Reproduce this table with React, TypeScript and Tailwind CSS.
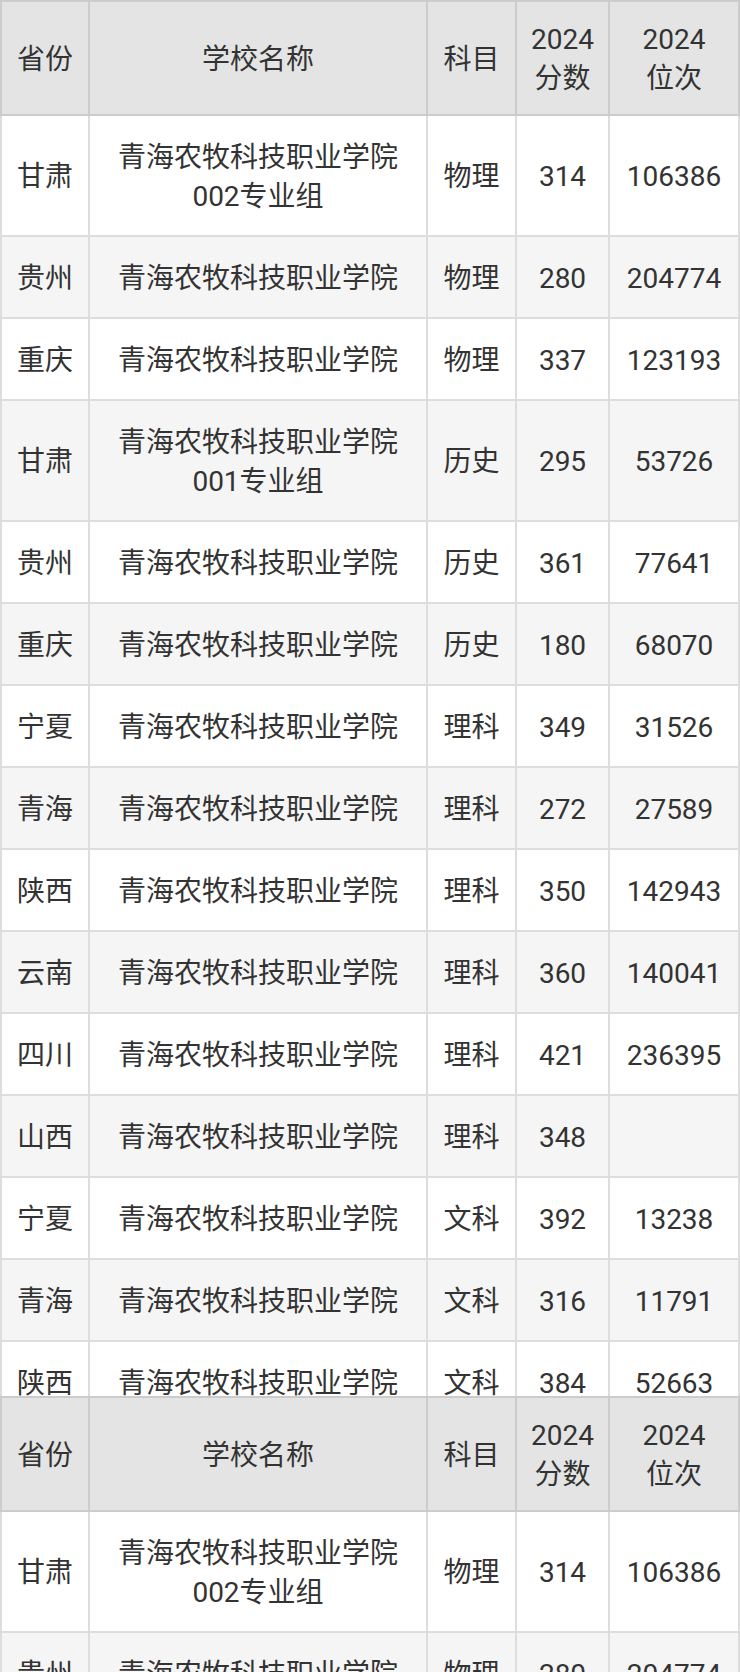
import React from 'react';

type Row = {
  province: string;
  school: string;
  group?: string;
  subject: string;
  score: string;
  rank: string;
};

const school = '青海农牧科技职业学院';

const rows: Row[] = [
  { province: '甘肃', school, group: '002专业组', subject: '物理', score: '314', rank: '106386' },
  { province: '贵州', school, subject: '物理', score: '280', rank: '204774' },
  { province: '重庆', school, subject: '物理', score: '337', rank: '123193' },
  { province: '甘肃', school, group: '001专业组', subject: '历史', score: '295', rank: '53726' },
  { province: '贵州', school, subject: '历史', score: '361', rank: '77641' },
  { province: '重庆', school, subject: '历史', score: '180', rank: '68070' },
  { province: '宁夏', school, subject: '理科', score: '349', rank: '31526' },
  { province: '青海', school, subject: '理科', score: '272', rank: '27589' },
  { province: '陕西', school, subject: '理科', score: '350', rank: '142943' },
  { province: '云南', school, subject: '理科', score: '360', rank: '140041' },
  { province: '四川', school, subject: '理科', score: '421', rank: '236395' },
  { province: '山西', school, subject: '理科', score: '348', rank: '' },
  { province: '宁夏', school, subject: '文科', score: '392', rank: '13238' },
  { province: '青海', school, subject: '文科', score: '316', rank: '11791' },
  { province: '陕西', school, subject: '文科', score: '384', rank: '52663' },
];

const cols = 'grid grid-cols-[86px_336px_87px_91px_128px] gap-x-[2px] px-[2px]';
const cell = 'flex items-center justify-center text-center pt-[2px]';

function ScoreTable() {
  return (
    <div className="w-[740px] text-[28px] text-[#333] font-['Roboto','Noto_Sans_CJK_SC',sans-serif]">
      {/* header */}
      <div className={`${cols} bg-[#cccccc] py-[2px] leading-[39px]`}>
        <div className={`${cell} h-[112px] bg-[#e4e4e4]`}>省份</div>
        <div className={`${cell} bg-[#e4e4e4]`}>学校名称</div>
        <div className={`${cell} bg-[#e4e4e4]`}>科目</div>
        <div className={`${cell} bg-[#e4e4e4]`}>
          2024
          <br />
          分数
        </div>
        <div className={`${cell} bg-[#e4e4e4]`}>
          2024
          <br />
          位次
        </div>
      </div>

      {/* body */}
      {rows.map((r, i) => {
        const bg = i % 2 === 0 ? 'bg-white' : 'bg-[#f5f5f5]';
        const h = r.group ? 'h-[119px]' : 'h-[80px]';
        return (
          <div key={i} className={`${cols} bg-[#dddddd] pb-[2px] leading-[39px]`}>
            <div className={`${cell} ${h} ${bg}`}>{r.province}</div>
            <div className={`${cell} flex-col ${bg}`}>
              <span>{r.school}</span>
              {r.group && <span>{r.group}</span>}
            </div>
            <div className={`${cell} ${bg}`}>{r.subject}</div>
            <div className={`${cell} ${bg}`}>{r.score}</div>
            <div className={`${cell} ${bg}`}>{r.rank}</div>
          </div>
        );
      })}
    </div>
  );
}

export default function App() {
  return (
    <div className="w-[740px] h-[1672px] overflow-hidden bg-white">
      <div className="h-[1396px] overflow-hidden">
        <ScoreTable />
      </div>
      <ScoreTable />
    </div>
  );
}
